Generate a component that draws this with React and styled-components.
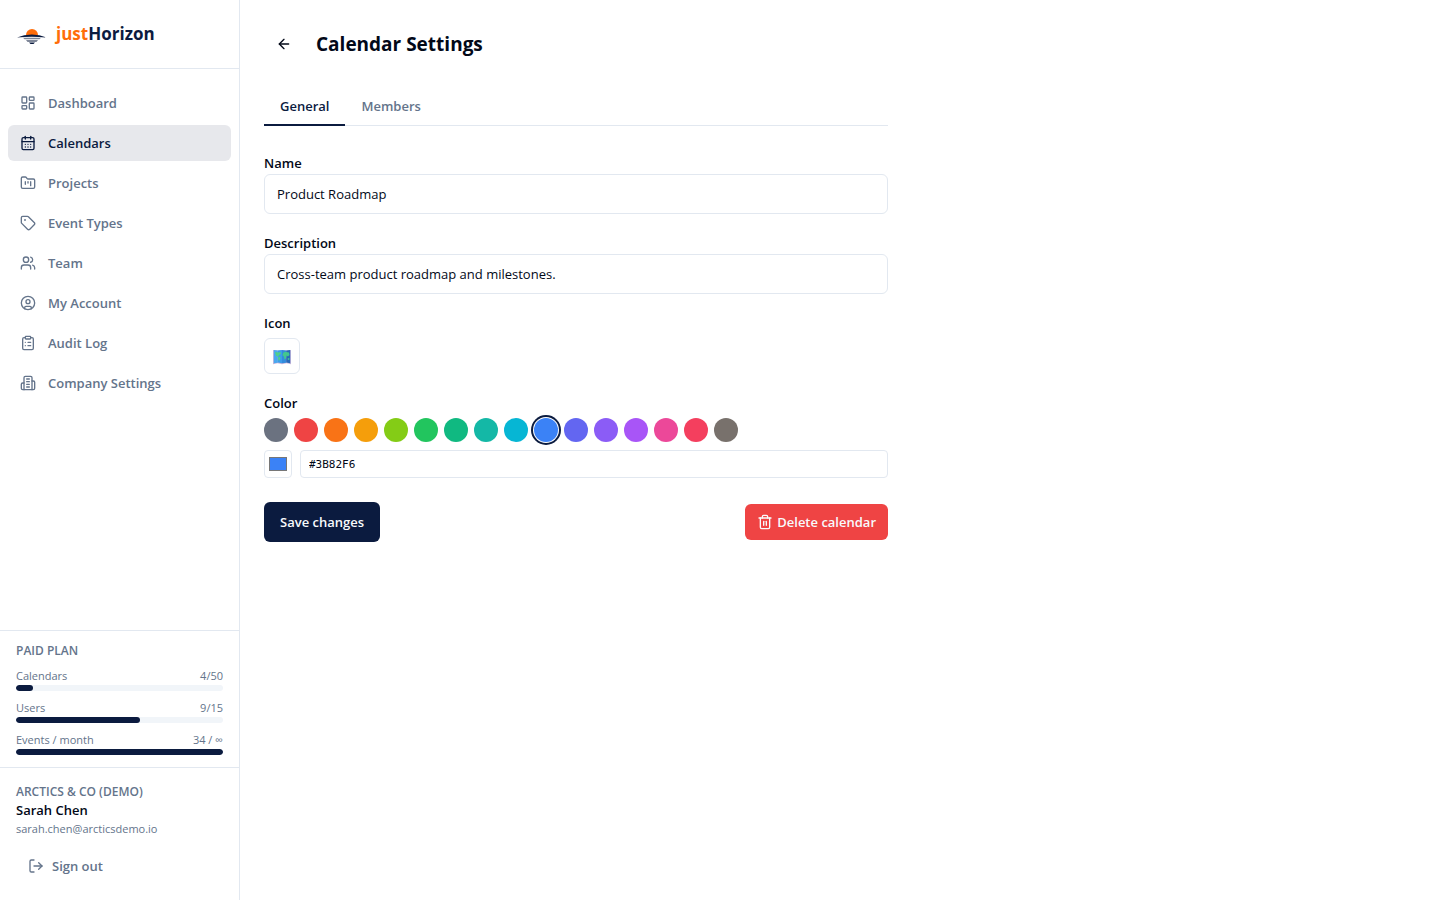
import { useState } from 'react';
import styled, { createGlobalStyle } from 'styled-components';
import {
  ArrowLeft,
  CalendarDays,
  CircleUser,
  ClipboardList,
  FolderKanban,
  LayoutDashboard,
  LogOut,
  Tag,
  Trash2,
  Users,
} from 'lucide-react';

const navy = '#0b1b3f';
const textColor = '#020817';
const mutedColor = '#64748b';
const borderColor = '#e2e8f0';
const orange = '#ff6d0a';
const red = '#ef4444';

const GlobalStyle = createGlobalStyle`
  *, *::before, *::after {
    box-sizing: border-box;
  }
  body {
    margin: 0;
    background-color: white;
    color: ${textColor};
    font-family: 'Segoe UI', 'Open Sans', 'Noto Sans', sans-serif;
    font-size: 13px;
    line-height: 20px;
  }
  button, input {
    font: inherit;
    color: inherit;
    margin: 0;
  }
`;

const Page = styled.div`
  display: flex;
  min-height: 100vh;
`;

const Sidebar = styled.aside`
  display: flex;
  flex-direction: column;
  flex: 0 0 240px;
  border-right: 1px solid ${borderColor};
`;
const Brand = styled.a`
  display: flex;
  align-items: center;
  gap: 8px;
  padding: 18px 16px;
  border-bottom: 1px solid ${borderColor};
  color: ${navy};
  font-size: 17px;
  font-weight: 700;
  line-height: 32px;
  text-decoration: none;
`;
const BrandAccent = styled.span`
  color: ${orange};
`;
const Nav = styled.nav`
  display: flex;
  flex: 1;
  flex-direction: column;
  gap: 4px;
  padding: 16px 8px;
`;
const NavLink = styled.a`
  display: flex;
  align-items: center;
  gap: 12px;
  padding: 8px 12px;
  border-radius: 6px;
  background-color: ${({ $active }) => ($active ? '#e7e8ec' : 'transparent')};
  color: ${({ $active }) => ($active ? navy : mutedColor)};
  font-weight: 600;
  text-decoration: none;
`;

const Plan = styled.section`
  display: flex;
  flex-direction: column;
  gap: 8px;
  padding: 12px 16px;
  border-top: 1px solid ${borderColor};
  color: ${mutedColor};
`;
const Overline = styled.h2`
  margin: 0;
  color: ${mutedColor};
  font-size: 12px;
  font-weight: 600;
  line-height: 16px;
  text-transform: uppercase;
`;
const Usage = styled.div`
  display: flex;
  flex-direction: column;
`;
const UsageLabel = styled.div`
  display: flex;
  justify-content: space-between;
  font-size: 11px;
  line-height: 18px;
`;
const Track = styled.div`
  height: 6px;
  border-radius: 3px;
  background-color: #f1f5f9;
  overflow: hidden;
`;
const Fill = styled.div`
  height: 100%;
  border-radius: 3px;
  background-color: ${navy};
`;

const Account = styled.section`
  padding: 16px;
  border-top: 1px solid ${borderColor};
`;
const UserName = styled.div`
  font-weight: 600;
`;
const Email = styled.div`
  color: ${mutedColor};
  font-size: 11px;
  line-height: 18px;
`;
const SignOut = styled.button`
  display: flex;
  align-items: center;
  gap: 8px;
  margin-top: 10px;
  padding: 8px 12px;
  border: 0;
  background: none;
  color: ${mutedColor};
  font-weight: 600;
  cursor: pointer;
`;

const Main = styled.main`
  flex: 1;
  max-width: 672px;
  padding: 24px;
`;
const Header = styled.header`
  display: flex;
  align-items: center;
  gap: 12px;
  margin-bottom: 24px;
`;
const BackButton = styled.button`
  display: flex;
  align-items: center;
  justify-content: center;
  width: 40px;
  height: 40px;
  padding: 0;
  border: 0;
  border-radius: 6px;
  background: none;
  cursor: pointer;
`;
const Title = styled.h1`
  margin: 0;
  font-size: 19px;
  font-weight: 700;
  line-height: 28px;
`;
const Tabs = styled.div`
  display: flex;
  margin-bottom: 28px;
  box-shadow: inset 0 -1px ${borderColor};
`;
const Tab = styled.button`
  padding: 8px 16px;
  border: 0;
  border-bottom: 2px solid ${({ $active }) => ($active ? navy : 'transparent')};
  background: none;
  color: ${({ $active }) => ($active ? navy : mutedColor)};
  font-weight: 600;
  cursor: pointer;
`;

const Form = styled.form`
  display: flex;
  flex-direction: column;
  gap: 20px;
`;
const Field = styled.div`
  display: flex;
  flex-direction: column;
  align-items: flex-start;
  gap: ${({ $gap = 2 }) => $gap}px;
`;
const Label = styled.label`
  font-weight: 600;
  line-height: 18px;
`;
const Input = styled.input`
  width: 100%;
  height: 40px;
  padding: 0 12px;
  border: 1px solid ${borderColor};
  border-radius: 6px;
  background-color: white;
`;
const IconButton = styled.button`
  display: flex;
  align-items: center;
  justify-content: center;
  width: 36px;
  height: 36px;
  padding: 0;
  border: 1px solid ${borderColor};
  border-radius: 6px;
  background-color: white;
  cursor: pointer;
`;
const ColorOptions = styled.div`
  display: flex;
  flex-direction: column;
  align-self: stretch;
  gap: 8px;
`;
const Swatches = styled.div`
  display: flex;
  flex-wrap: wrap;
  gap: 6px;
`;
const Swatch = styled.button`
  width: 24px;
  height: 24px;
  padding: 0;
  border: 0;
  border-radius: 50%;
  background-color: ${({ $color }) => $color};
  box-shadow: ${({ $selected }) => ($selected ? `0 0 0 1px white, 0 0 0 3px ${navy}` : 'none')};
  cursor: pointer;
`;
const CustomColor = styled.div`
  display: flex;
  gap: 8px;
`;
const ColorPicker = styled.input`
  flex: none;
  width: 28px;
  height: 28px;
  padding: 2px;
  border: 1px solid ${borderColor};
  border-radius: 4px;
  background-color: white;
`;
const HexInput = styled(Input)`
  flex: 1;
  height: 28px;
  padding: 0 8px;
  border-radius: 4px;
  font-family: Consolas, 'DejaVu Sans Mono', monospace;
  font-size: 11px;
`;
const Actions = styled.div`
  display: flex;
  align-items: center;
  justify-content: space-between;
  margin-top: 4px;
`;
const Button = styled.button`
  display: flex;
  align-items: center;
  gap: 4px;
  height: ${({ $danger }) => ($danger ? 36 : 40)}px;
  padding: 0 ${({ $danger }) => ($danger ? 12 : 16)}px;
  border: 0;
  border-radius: 6px;
  background-color: ${({ $danger }) => ($danger ? red : navy)};
  color: #f8fafc;
  font-weight: 600;
  cursor: pointer;
`;

const Logo = () => (
  <svg width="32" height="32" viewBox="0 0 32 32" aria-hidden="true">
    <path d="M10 17a6 6 0 0 1 12 0z" fill={orange} />
    <path d="M1 19.600Q8 16.400 15.800 16.400T30.500 19.600Q23 18.800 15.800 18.800T1 19.600z" fill={navy} />
    <path d="M7 19.800h18l-1.500 1.500h-15zM10 22h12l-1.500 1.900h-9z" fill="#7f8798" />
    <path d="M13 24.600h6l-1.500 1.500h-3z" fill={navy} />
  </svg>
);

const BuildingIcon = ({ size }) => (
  <svg
    width={size}
    height={size}
    viewBox="0 0 24 24"
    fill="none"
    stroke="currentColor"
    strokeWidth="2"
    strokeLinecap="round"
    strokeLinejoin="round"
    aria-hidden="true"
  >
    <path d="M6 22V4a2 2 0 0 1 2-2h8a2 2 0 0 1 2 2v18Z" />
    <path d="M6 12H4a2 2 0 0 0-2 2v6a2 2 0 0 0 2 2h2" />
    <path d="M18 9h2a2 2 0 0 1 2 2v9a2 2 0 0 1-2 2h-2" />
    <path d="M10 6h4M10 10h4M10 14h4M10 18h4" />
  </svg>
);

const MapIcon = () => (
  <svg width="20" height="18" viewBox="0 0 20 18" aria-hidden="true">
    <path d="M1 3l4.500.500L10 3l4.500.500L19 3v14.200l-4.500-1-4.500 1-4.500-1-4.500 1z" fill="#c9b8dc" />
    <path d="M1.800 3l4 .500v12.200l-4 .6z" fill="#4aa8f0" />
    <path d="M5.800 3.500L10 3v13.200l-4.200-.6z" fill="#3b9ceb" />
    <path d="M10 3l4.200.500v12.200l-4.200.6z" fill="#338bdc" />
    <path d="M14.200 3.500l4-.500v13.200l-4-.6z" fill="#2769b8" />
    <path d="M3 5l3 .4 2.500-.4.500 1.700-2 1.500-1 1.500-2-1zM6.500 9.500l2 1-.5 2-1.200 1.600-.8-2.600z" fill="#4fd08a" />
    <path d="M11 6l2-1.200 4 .700.500 2.500-1.500 1.500-1.500-1-.5 3-1.500 1-.5-3-1.500-1z" fill="#43c78d" />
    <path d="M15.500 11.500l1.700-.5.300 1.500-1.500.5z" fill="#43c78d" />
  </svg>
);

const navItems = [
  { label: 'Dashboard', icon: LayoutDashboard },
  { label: 'Calendars', icon: CalendarDays, active: true },
  { label: 'Projects', icon: FolderKanban },
  { label: 'Event Types', icon: Tag },
  { label: 'Team', icon: Users },
  { label: 'My Account', icon: CircleUser },
  { label: 'Audit Log', icon: ClipboardList },
  { label: 'Company Settings', icon: BuildingIcon },
];

const usages = [
  { label: 'Calendars', value: '4/50', percent: 8 },
  { label: 'Users', value: '9/15', percent: 60 },
  { label: 'Events / month', value: '34 / ∞', percent: 100 },
];

const colors = [
  '#6B7280', '#EF4444', '#F97316', '#F59E0B', '#84CC16', '#22C55E', '#10B981', '#14B8A6',
  '#06B6D4', '#3B82F6', '#6366F1', '#8B5CF6', '#A855F7', '#EC4899', '#F43F5E', '#78716C',
];

export default function App() {
  const [tab, setTab] = useState('General');
  const [color, setColor] = useState('#3B82F6');

  return (
    <>
      <GlobalStyle />
      <Page>
        <Sidebar>
          <Brand href="#">
            <Logo />
            <span>
              <BrandAccent>just</BrandAccent>Horizon
            </span>
          </Brand>
          <Nav>
            {navItems.map(({ label, icon: Icon, active }) => (
              <NavLink key={label} href="#" $active={active} aria-current={active ? 'page' : undefined}>
                <Icon size={16} />
                {label}
              </NavLink>
            ))}
          </Nav>
          <Plan>
            <Overline>Paid plan</Overline>
            {usages.map(({ label, value, percent }) => (
              <Usage key={label}>
                <UsageLabel>
                  <span>{label}</span>
                  <span>{value}</span>
                </UsageLabel>
                <Track>
                  <Fill style={{ width: `${percent}%` }} />
                </Track>
              </Usage>
            ))}
          </Plan>
          <Account>
            <Overline>Arctics &amp; Co (Demo)</Overline>
            <UserName>Sarah Chen</UserName>
            <Email>sarah.chen@arcticsdemo.io</Email>
            <SignOut type="button">
              <LogOut size={16} />
              Sign out
            </SignOut>
          </Account>
        </Sidebar>
        <Main>
          <Header>
            <BackButton type="button" aria-label="Back">
              <ArrowLeft size={16} />
            </BackButton>
            <Title>Calendar Settings</Title>
          </Header>
          <Tabs role="tablist">
            {['General', 'Members'].map((name) => (
              <Tab
                key={name}
                type="button"
                role="tab"
                aria-selected={tab === name}
                $active={tab === name}
                onClick={() => setTab(name)}
              >
                {name}
              </Tab>
            ))}
          </Tabs>
          <Form onSubmit={(e) => e.preventDefault()}>
            <Field>
              <Label htmlFor="name">Name</Label>
              <Input id="name" type="text" defaultValue="Product Roadmap" />
            </Field>
            <Field>
              <Label htmlFor="description">Description</Label>
              <Input id="description" type="text" defaultValue="Cross-team product roadmap and milestones." />
            </Field>
            <Field $gap={6}>
              <Label htmlFor="icon">Icon</Label>
              <IconButton id="icon" type="button">
                <MapIcon />
              </IconButton>
            </Field>
            <Field $gap={6}>
              <Label htmlFor="hex">Color</Label>
              <ColorOptions>
                <Swatches>
                  {colors.map((value) => (
                    <Swatch
                      key={value}
                      type="button"
                      aria-label={value}
                      $color={value}
                      $selected={value === color}
                      onClick={() => setColor(value)}
                    />
                  ))}
                </Swatches>
                <CustomColor>
                  <ColorPicker
                    type="color"
                    aria-label="Custom color"
                    value={color.toLowerCase()}
                    onChange={(e) => setColor(e.target.value.toUpperCase())}
                  />
                  <HexInput id="hex" type="text" value={color} onChange={(e) => setColor(e.target.value)} />
                </CustomColor>
              </ColorOptions>
            </Field>
            <Actions>
              <Button type="submit">Save changes</Button>
              <Button type="button" $danger>
                <Trash2 size={16} />
                Delete calendar
              </Button>
            </Actions>
          </Form>
        </Main>
      </Page>
    </>
  );
}
